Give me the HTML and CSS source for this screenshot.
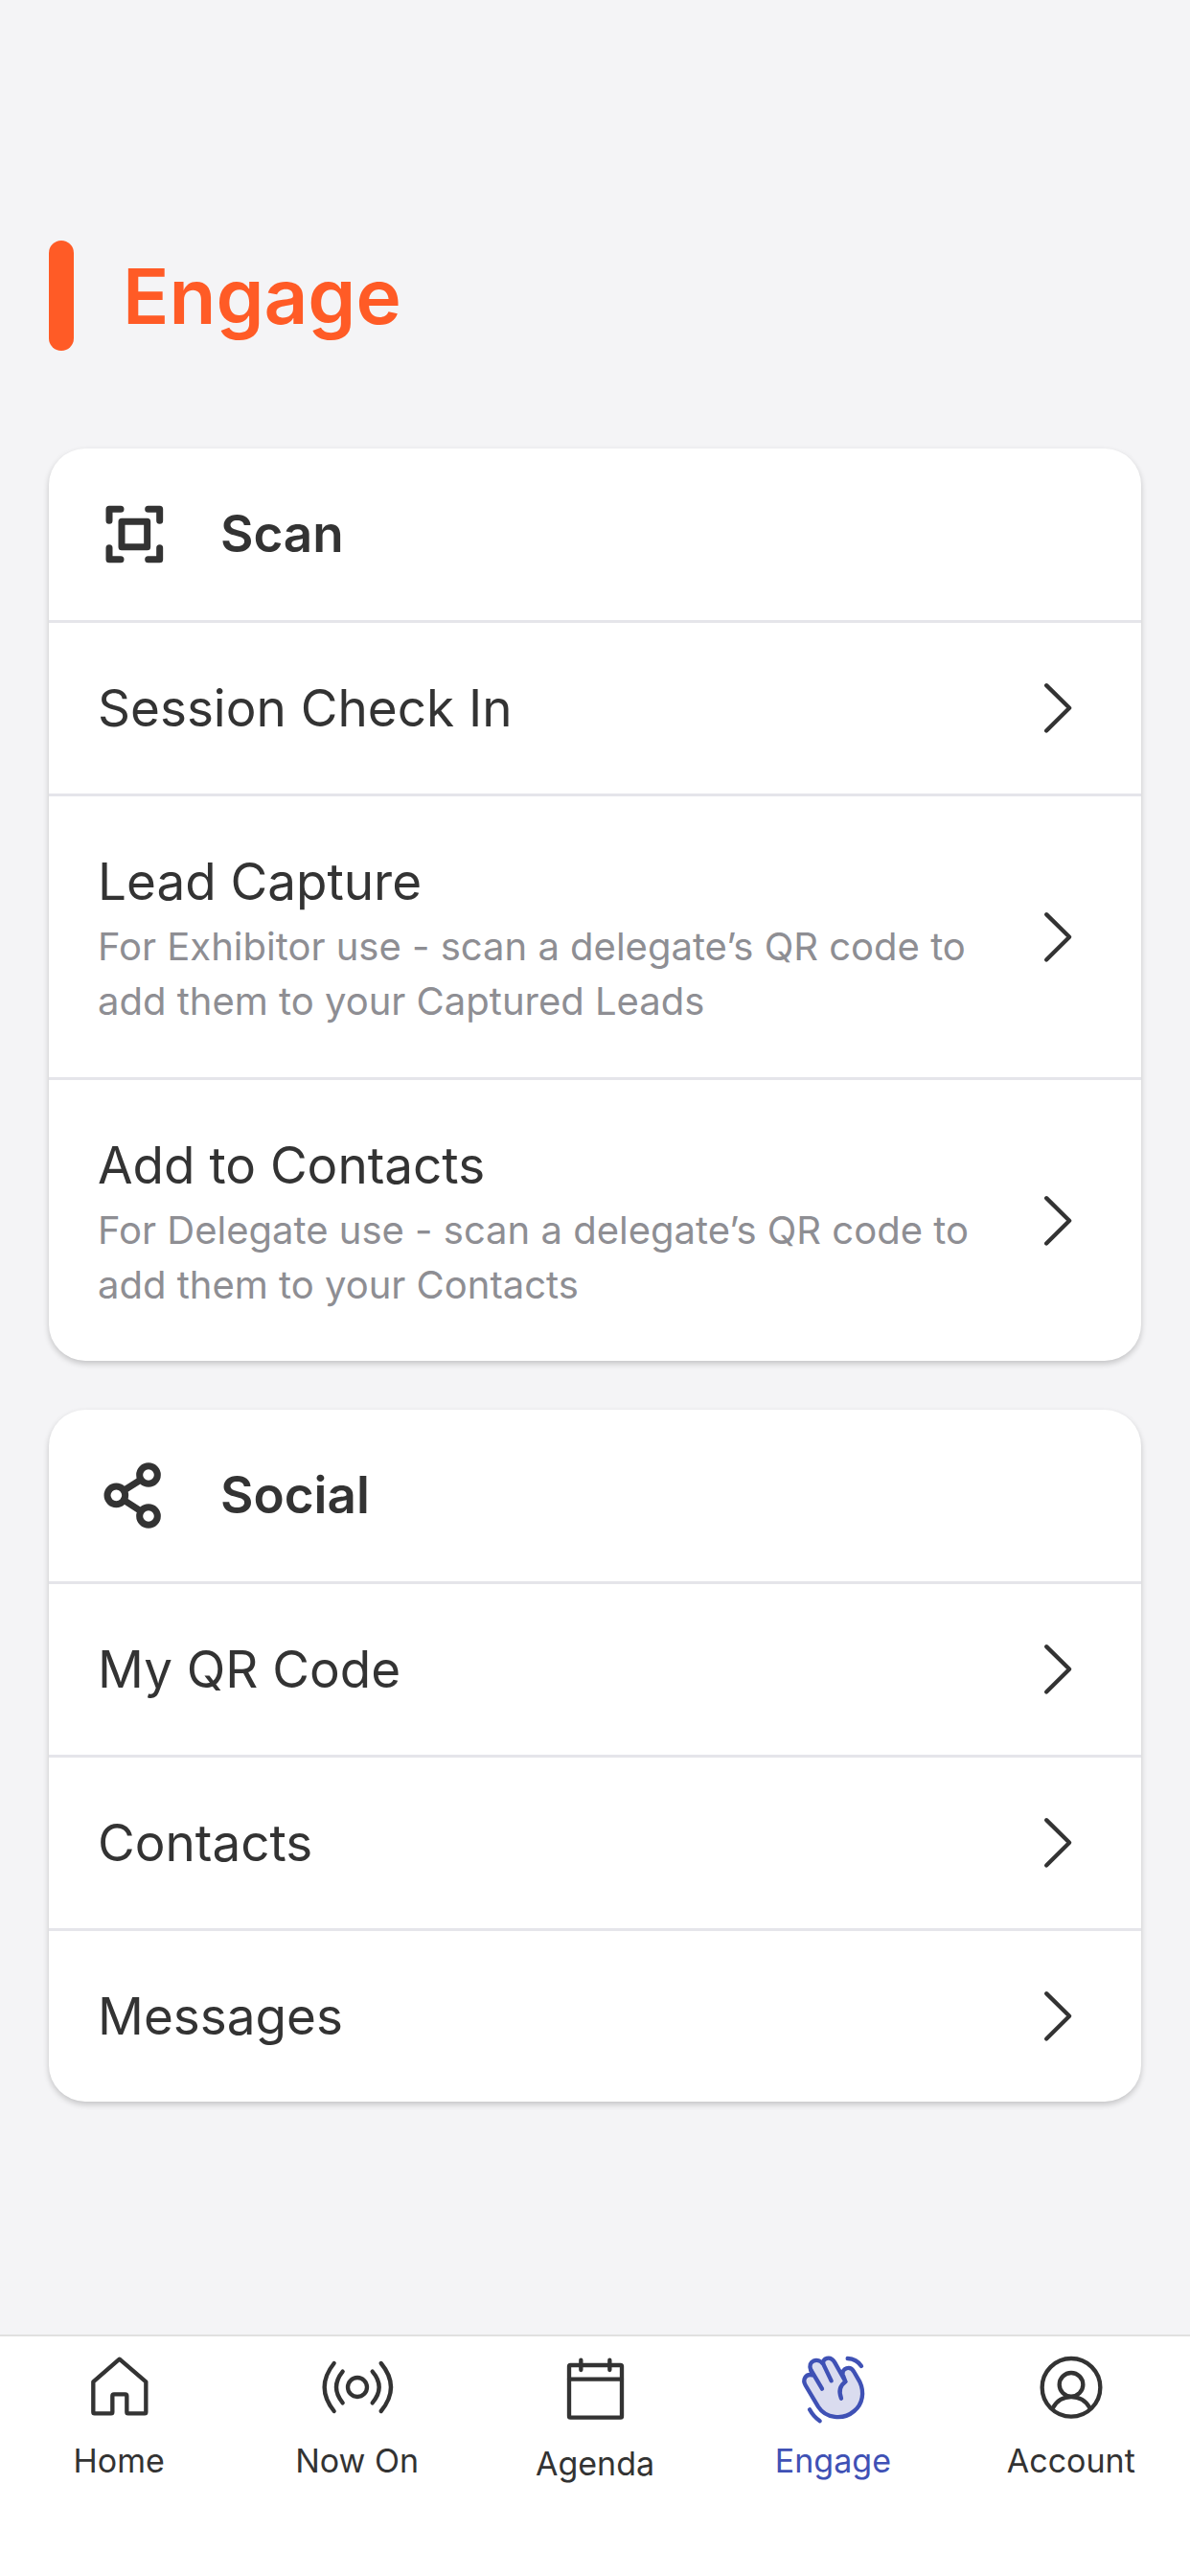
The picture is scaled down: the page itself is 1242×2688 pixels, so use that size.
FILE: index.html
```html
<!DOCTYPE html>
<html lang="en">
<head>
  <meta charset="utf-8">
  <meta name="viewport" content="width=device-width, initial-scale=1">
  <title>Engage</title>
  <link rel="stylesheet" href="styles.css">
</head>
<body>
  <svg class="sprite" aria-hidden="true">
    <symbol id="chevron" viewBox="489 152 231 231">
      <path d="M576 195 649 267 576 339" fill="none" stroke="currentColor" stroke-width="13" stroke-linecap="round" stroke-linejoin="round"/>
    </symbol>
  </svg>

  <main class="page">
    <header class="page-header">
      <h1 class="page-title">Engage</h1>
    </header>

    <section class="card" aria-labelledby="scan-heading">
      <div class="card-header">
        <svg class="card-icon" viewBox="215 206 231 231" aria-hidden="true">
          <path d="M287 243H251V279M373 243H409V279M251 364V400H287M409 364V400H373M290 282H370V361H290Z"/>
        </svg>
        <h2 class="card-title" id="scan-heading">Scan</h2>
      </div>
      <ul class="list">
        <li class="item">
          <a class="row" href="#check-in">
            <span class="row-text"><span class="row-title">Session Check In</span></span>
            <svg class="chevron" aria-hidden="true"><use href="#chevron"/></svg>
          </a>
        </li>
        <li class="item">
          <a class="row" href="#lead-capture">
            <span class="row-text">
              <span class="row-title">Lead Capture</span>
              <span class="row-note">For Exhibitor use - scan a delegate’s QR code to add them to your Captured Leads</span>
            </span>
            <svg class="chevron" aria-hidden="true"><use href="#chevron"/></svg>
          </a>
        </li>
        <li class="item">
          <a class="row" href="#add-contact">
            <span class="row-text">
              <span class="row-title">Add to Contacts</span>
              <span class="row-note">For Delegate use - scan a delegate’s QR code to add them to your Contacts</span>
            </span>
            <svg class="chevron" aria-hidden="true"><use href="#chevron"/></svg>
          </a>
        </li>
      </ul>
    </section>

    <section class="card" aria-labelledby="social-heading">
      <div class="card-header">
        <svg class="card-icon" viewBox="215 216 231 231" aria-hidden="true">
          <circle cx="273" cy="331" r="28"/>
          <circle cx="374" cy="267" r="28"/>
          <circle cx="374" cy="396" r="28"/>
          <path d="M298 315 349 283M298 347 349 380"/>
        </svg>
        <h2 class="card-title" id="social-heading">Social</h2>
      </div>
      <ul class="list">
        <li class="item">
          <a class="row" href="#my-qr">
            <span class="row-text"><span class="row-title">My QR Code</span></span>
            <svg class="chevron" aria-hidden="true"><use href="#chevron"/></svg>
          </a>
        </li>
        <li class="item">
          <a class="row" href="#contacts">
            <span class="row-text"><span class="row-title">Contacts</span></span>
            <svg class="chevron" aria-hidden="true"><use href="#chevron"/></svg>
          </a>
        </li>
        <li class="item">
          <a class="row" href="#messages">
            <span class="row-text"><span class="row-title">Messages</span></span>
            <svg class="chevron" aria-hidden="true"><use href="#chevron"/></svg>
          </a>
        </li>
      </ul>
    </section>
  </main>

  <nav class="tabs" aria-label="Main">
    <a class="tab" href="#home">
      <svg class="tab-icon" viewBox="183 114 198 198" aria-hidden="true">
        <path d="M284 125 202 196V291Q202 295 206 295H258Q262 295 262 291V240Q262 235 267 235H302Q307 235 307 240V291Q307 295 311 295H363Q367 295 367 291V196Z"/>
      </svg>
      <span class="tab-label">Home</span>
    </a>
    <a class="tab" href="#now-on">
      <svg class="tab-icon" viewBox="930 114 198 198" aria-hidden="true">
        <circle cx="1029" cy="213" r="30"/>
        <path d="M983 164Q943 213 983 262M1076 164Q1118 213 1076 262M956 138Q896 213 956 288M1103 138Q1165 213 1103 288"/>
      </svg>
      <span class="tab-label">Now On</span>
    </a>
    <a class="tab" href="#agenda">
      <svg class="tab-icon tab-icon-tall" viewBox="324 114 198 207" aria-hidden="true">
        <rect x="342" y="144" width="165" height="164" rx="4"/>
        <path d="M342 188H507M379 128V159M469 128V159"/>
      </svg>
      <span class="tab-label">Agenda</span>
    </a>
    <a class="tab tab-active" href="#engage" aria-current="page">
      <svg class="tab-icon" viewBox="168 114 198 198" aria-hidden="true">
        <path class="tint" d="M307 195 274 136C260 112 233 122 238 141 222 118 186 130 199 160L203 175C182 170 172 190 182 207L222 274C245 310 299 318 334 288 362 265 367 228 352 196L334 165C322 143 295 154 299 174Z"/>
        <path d="M240 145 263 193M198 157 234 218M307 196C289 209 286 228 294 248M314 123Q342 124 357 147M195 283Q207 305 227 319"/>
      </svg>
      <span class="tab-label">Engage</span>
    </a>
    <a class="tab" href="#account">
      <svg class="tab-icon" viewBox="256 114 198 198" aria-hidden="true">
        <circle cx="355" cy="214" r="91"/>
        <circle cx="355" cy="205" r="37"/>
        <path d="M298 277C323 232 387 232 413 277"/>
      </svg>
      <span class="tab-label">Account</span>
    </a>
  </nav>
</body>
</html>
```

FILE: styles.css
```css
* {
  box-sizing: border-box;
}

body {
  margin: 0;
  min-height: 100vh;
  display: flex;
  flex-direction: column;
  background: #f4f4f6;
  color: #333;
  font-family: Inter, "Open Sans", sans-serif;
}

a {
  color: inherit;
  text-decoration: none;
}

.sprite {
  display: none;
}

.page {
  flex: 1;
  display: flex;
  flex-direction: column;
  gap: 51px;
  padding: 251px 51px 51px;
}

.page-header {
  display: flex;
  gap: 51px;
  margin-bottom: 51px;
}

.page-header::before {
  content: "";
  width: 26px;
  border-radius: 13px;
  background: #ff5b26;
}

.page-title {
  margin: 0;
  color: #ff5b26;
  font-size: 80px;
  font-weight: 600;
  line-height: 115px;
}

.card {
  border-radius: 38px;
  background: #fff;
  box-shadow: 0 3px 6px rgba(0, 0, 0, 0.2);
}

.card-header {
  display: flex;
  align-items: center;
  gap: 51px;
  padding: 51px;
}

.card-icon {
  width: 77px;
  height: 77px;
  fill: none;
  stroke: currentColor;
  stroke-width: 21;
  stroke-linecap: round;
  stroke-linejoin: round;
}

.card-title {
  margin: 0;
  font-size: 53px;
  font-weight: 600;
  line-height: 77px;
}

.list {
  margin: 0;
  padding: 0;
  list-style: none;
}

.item {
  border-top: 3px solid #e5e5ea;
}

.row {
  display: flex;
  align-items: center;
  gap: 26px;
  padding: 51px;
}

.row-text {
  flex: 1;
  display: flex;
  flex-direction: column;
  gap: 1px;
}

.row-title {
  font-size: 53px;
  line-height: 76px;
}

.row-note {
  color: #8e8e93;
  font-size: 40px;
  line-height: 57px;
}

.chevron {
  flex: none;
  width: 77px;
  height: 76px;
}

.tabs {
  display: grid;
  grid-template-columns: repeat(5, 1fr);
  padding: 20px 0 93px;
  border-top: 2px solid #e0e0e0;
  background: #fff;
}

.tab {
  display: flex;
  flex-direction: column;
  align-items: center;
  gap: 20px;
}

.tab-active {
  color: #3f51b5;
}

.tab-icon {
  width: 66px;
  height: 66px;
  overflow: visible;
  fill: none;
  stroke: currentColor;
  stroke-width: 13;
  stroke-linecap: round;
  stroke-linejoin: round;
}

.tab-icon-tall {
  height: 69px;
}

.tint {
  fill: #dadcef;
}

.tab-label {
  font-size: 34px;
  line-height: 48px;
}
```
